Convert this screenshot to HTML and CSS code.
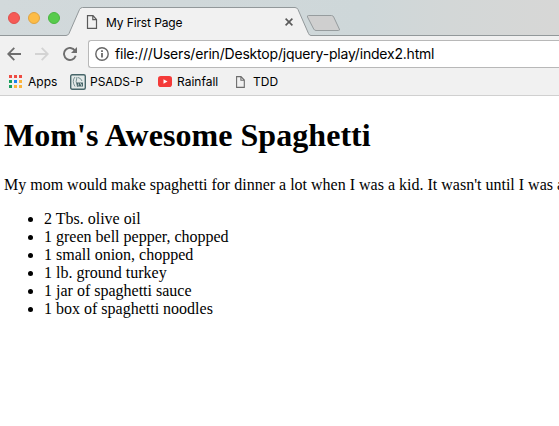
FILE: index.html
```html
<!DOCTYPE html>
<html lang="en">
<head>
<meta charset="utf-8">
<title>My First Page</title>
<link rel="stylesheet" href="styles.css">
</head>
<body>
<header class="browser">
  <div class="tabstrip">
    <svg class="tab-shapes" width="559" height="36" viewBox="0 0 559 36">
      <path d="M0 35.5H66Q68 35.5 69 33.5L79.500 9.500Q80.500 7.500 82.500 7.500H295Q297 7.500 298 9.500L308.500 33.500Q309.300 35.500 311 35.500H559V37H0Z" fill="#f1f1f1" stroke="#92989a"/>
      <path d="M308.500 15.500H331.500Q333 15.500 333.700 17L339.300 29Q340 30.500 338.500 30.500H316Q314.500 30.500 313.700 29L307.500 17Q307 15.500 308.500 15.500Z" fill="#cfcfcf" stroke="#969c9e"/>
    </svg>
    <div class="lights"><i class="light red"></i><i class="light amber"></i><i class="light green"></i></div>
    <div class="tab">
      <svg class="tab-page" width="12" height="14" viewBox="0 0 12 14"><path d="M1.500.7H7L10.500 4.500V13.300H1.500ZM6.800.7V4.700H10.500" fill="none" stroke="#5a5a5a" stroke-width="1.200"/></svg>
      <span class="tab-title">My First Page</span>
      <svg class="close" width="8" height="8" viewBox="0 0 8 8"><path d="M.6.6L7.400 7.400M7.400.6L.6 7.400" stroke="#5a5a5a" stroke-width="1.600"/></svg>
    </div>
  </div>
  <div class="toolbar">
    <svg class="nav" width="14" height="14" viewBox="0 0 14 14"><path d="M14 7H1.500M7.300 .9L1.200 7L7.300 13.100" fill="none" stroke="#6e6e6e" stroke-width="1.800"/></svg>
    <svg class="nav" width="14" height="14" viewBox="0 0 14 14"><path d="M0 7H12.500M6.700 .9L12.800 7L6.700 13.100" fill="none" stroke="#d3d3d3" stroke-width="1.800"/></svg>
    <svg class="nav" width="14" height="14" viewBox="0 0 14 14"><path d="M12 3.600A6 6 0 1 0 12.700 8.800" fill="none" stroke="#6e6e6e" stroke-width="1.900"/><path d="M14 0V6H8Z" fill="#6e6e6e"/></svg>
    <div class="omnibox">
      <svg width="14" height="14" viewBox="0 0 14 14"><circle cx="7" cy="7" r="6.200" fill="none" stroke="#666" stroke-width="1.400"/><path d="M6.200 6H7.800V10.600H6.200ZM6.200 3.300H7.800V4.900H6.200Z" fill="#555"/></svg>
      <span class="url">file:///Users/erin/Desktop/jquery-play/index2.html</span>
    </div>
  </div>
  <nav class="bookmarks">
    <svg class="apps" width="13" height="13" viewBox="0 0 13 13"><path d="M0 0h3v3H0zM5 0h3v3H5zM10 0h3v3h-3z" fill="#ee4b42"/><path d="M0 5h3v3H0zM0 10h3v3H0z" fill="#1a9f5c"/><path d="M5 5h3v3H5z" fill="#1a83ee"/><path d="M10 5h3v3h-3zM5 10h3v3H5zM10 10h3v3h-3z" fill="#fcb43b"/></svg>
    <span class="label label-apps">Apps</span>
    <svg class="psads" width="16" height="16" viewBox="0 0 16 16"><rect x=".7" y=".7" width="14.600" height="14.600" rx="1.500" fill="#e3eae9" stroke="#48666a" stroke-width="1.400"/><path d="M5 3Q1.500 7 5 12.500M7 3Q5 7 7.500 13M8 3.500Q11 4 12 7" fill="none" stroke="#789092" stroke-width="1"/><path d="M6.500 8.500H13V12.500H7.500Z" fill="#48666a"/><path d="M8.500 9.500V11.500M10.500 9V10.500M11.500 10V12" stroke="#d9e2e1" stroke-width=".7"/></svg>
    <span class="label label-psads">PSADS-P</span>
    <svg class="video" width="14" height="11" viewBox="0 0 14 11"><rect width="14" height="11" rx="2.800" fill="#f43b39"/><path d="M5.500 3.200L9.500 5.500L5.500 7.800Z" fill="#fff"/></svg>
    <span class="label label-rainfall">Rainfall</span>
    <svg class="page" width="9" height="12" viewBox="0 0 9 12"><path d="M.6.6H5L8.300 4V11.400H.6ZM4.900.6V4.200H8.300" fill="none" stroke="#6c6c6c" stroke-width="1.100"/></svg>
    <span class="label label-tdd">TDD</span>
  </nav>
</header>
<main>
  <h1>Mom's Awesome Spaghetti</h1>
  <p>My mom would make spaghetti for dinner a lot when I was a kid. It wasn't until I was a</p>
  <ul>
    <li>2 Tbs. olive oil</li>
    <li>1 green bell pepper, chopped</li>
    <li>1 small onion, chopped</li>
    <li>1 lb. ground turkey</li>
    <li>1 jar of spaghetti sauce</li>
    <li>1 box of spaghetti noodles</li>
  </ul>
</main>
</body>
</html>
```
FILE: styles.css
```css
* { box-sizing: border-box; }
body { margin: 0; height: 426px; overflow: hidden; background: #fff; color: #000; font-family: "Liberation Serif", serif; }
svg { display: block; flex: none; }
.browser { height: 96px; background: #f1f1f1; border-bottom: 1px solid #d0d0d0; font-family: Inter, sans-serif; }
.tabstrip { position: relative; height: 36px; display: flex; background: linear-gradient(90deg, #d2d9db 0, #ced7d9 65%, #d3d7d7 80%, #d7d7d6 100%); }
.tab-shapes { position: absolute; inset: 0; }
.lights { position: relative; display: flex; gap: 8px; width: 86px; padding: 12px 0 0 8px; }
.light { width: 12px; height: 12px; border-radius: 50%; }
.red { background: #f65a56; border: 1px solid #df504d; }
.amber { background: #fdbc46; border: 1px solid #dfa442; }
.green { background: #57cb4c; border: 1px solid #49b641; }
.tab { position: relative; display: flex; align-items: center; width: 208px; height: 28px; margin-top: 8px; }
.tab-title { margin-left: 8px; font-size: 12px; letter-spacing: -.11px; white-space: nowrap; }
.close { margin-left: auto; margin-right: 1px; }
.toolbar { display: flex; align-items: center; height: 36px; padding-left: 7px; }
.nav { margin-right: 14px; }
.omnibox { display: flex; align-items: center; flex: 1; height: 28px; margin-left: -3px; padding-left: 6px; background: #fff; border: 1px solid #b8b8b8; border-right: 0; border-radius: 3px 0 0 3px; }
.url { margin-left: 6px; font-size: 14px; letter-spacing: -.2px; line-height: 18px; padding-bottom: 1px; white-space: nowrap; }
.bookmarks { display: flex; align-items: center; height: 20px; padding-left: 9px; font-size: 12px; white-space: nowrap; }
.label { flex: none; padding-bottom: 2px; }
.apps, .psads, .video, .page { margin-bottom: 1px; }
.label-apps { width: 42px; margin-left: 6px; }
.label-psads { width: 68px; margin-left: 4px; }
.label-rainfall { width: 59px; margin-left: 5px; }
.label-tdd { margin-left: 8px; }
main { padding: 0 4px; }
h1 { margin: 21px 0 22px; font-size: 32px; line-height: 37px; letter-spacing: .05px; white-space: nowrap; }
p { margin: 0 0 16px; font-size: 16px; line-height: 18px; white-space: nowrap; overflow: hidden; margin-right: -4px; }
ul { margin: 0; padding-left: 40px; font-size: 16px; line-height: 18px; }
```
